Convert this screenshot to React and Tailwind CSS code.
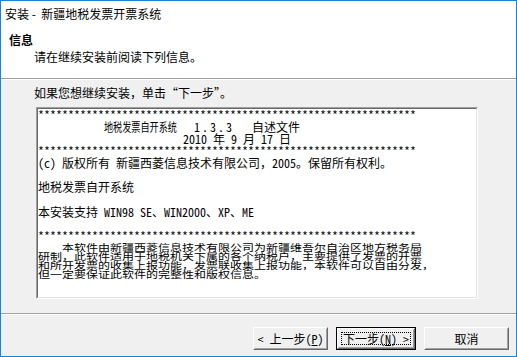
import React from 'react';

const mono = { fontFamily: '"Noto Sans Mono CJK SC", "Liberation Mono", "Noto Sans CJK SC", monospace' };
const stars = '*'.repeat(63);

const Line = ({ children, className = '' }) => (
    <div className={`h-[12px] leading-[12px] whitespace-pre ${className}`}>{children}</div>
);

// the last paragraph in the readme is squeezed vertically
const PLine = ({ children }) => (
    <div className="h-[9px]">
        <div className="h-[12px] leading-[12px] whitespace-pre scale-y-[0.8] origin-top">{children}</div>
    </div>
);

const Button = ({ children, isDefault, w }) => (
    <div className={`h-[23px] ${w} ${isDefault ? 'border border-black' : ''}`}>
        <div className="h-full w-full border border-t-white border-l-white border-r-[#696969] border-b-[#696969]">
            <div className="h-full w-full border border-t-[#f0f0f0] border-l-[#f0f0f0] border-r-[#a0a0a0] border-b-[#a0a0a0] bg-[#f0f0f0] flex items-center justify-center p-[2px]">
                <div className={`h-full w-full flex items-center justify-center text-[12px] leading-none text-black whitespace-pre ${isDefault ? 'outline outline-1 outline-dotted outline-black -outline-offset-1' : ''}`}>
                    {children}
                </div>
            </div>
        </div>
    </div>
);

export default function App() {
    return (
        <div
            className="w-[517px] h-[357px] border border-[#1883d7] bg-[#f0f0f0] flex flex-col text-black overflow-hidden"
            style={{ fontFamily: '"Noto Sans CJK SC", "Liberation Sans", sans-serif' }}
        >
            {/* title bar + header panel */}
            <div className="h-[77px] bg-white pl-[4px] pt-[5px]">
                <div className="text-[12px] leading-[16px] whitespace-pre">安装 -  新疆地税发票开票系统</div>
                <div className="mt-[10px] pl-[4px] text-[12px] leading-[16px] font-bold">信息</div>
                <div className="pl-[29px] text-[12px] leading-[16px] mt-px">请在继续安装前阅读下列信息。</div>
            </div>
            <div className="h-px bg-[#a0a0a0]" />
            <div className="h-px bg-white" />

            {/* body */}
            <div className="h-[233px] pl-[33px] pt-[5px]">
                <div className="text-[12px] leading-[16px]">如果您想继续安装，单击“下一步”。</div>
                <div className="mt-[6px] ml-[2px] w-[442px] h-[192px] border border-t-[#a0a0a0] border-l-[#a0a0a0] border-r-white border-b-white">
                    <div className="h-full w-full border border-t-[#696969] border-l-[#696969] border-r-[#e3e3e3] border-b-[#e3e3e3] bg-white overflow-hidden text-[12px]" style={mono}>
                        <Line>{stars}</Line>
                        <Line>
                            <span className="ml-[66px] inline-block w-[74px] align-top">
                                <span className="inline-block scale-x-[0.76] origin-left">地税发票自开系统</span>
                            </span>
                            <span className="ml-[16px] tracking-[2px]">1.3.3</span>
                            <span className="ml-[18px]">自述文件</span>
                        </Line>
                        <Line><span className="ml-[145px]">2010 年 9 月 17 日</span></Line>
                        <Line>{stars}</Line>
                        <Line>(c) 版权所有 新疆西菱信息技术有限公司，2005。保留所有权利。</Line>
                        <Line />
                        <Line>地税发票自开系统</Line>
                        <Line className="h-[13px]" />
                        <Line>本安装支持 WIN98 SE、WIN2000、XP、ME</Line>
                        <Line className="h-[10px]" />
                        <Line className="h-[11px]">{stars}</Line>
                        <PLine>    本软件由新疆西菱信息技术有限公司为新疆维吾尔自治区地方税务局</PLine>
                        <PLine>研制，此软件适用于地税机关下属的各个纳税户，主要提供了发票的开票</PLine>
                        <PLine>和所开发票的收集上报功能，发票联收集上报功能，本软件可以自由分发，</PLine>
                        <PLine>但一定要保证此软件的完整性和版权信息。</PLine>
                    </div>
                </div>
            </div>

            <div className="h-px bg-[#a0a0a0]" />
            <div className="h-px bg-white" />

            {/* buttons */}
            <div className="flex-1 flex justify-end items-start pt-[12px] pr-[7px] gap-[8px]" style={mono}>
                <Button w="w-[75px]">&lt; 上一步(<span className="underline">P</span>)</Button>
                <Button w="w-[80px]" isDefault>下一步(<span className="underline">N</span>) &gt;</Button>
                <Button w="w-[85px]">取消</Button>
            </div>
        </div>
    );
}
